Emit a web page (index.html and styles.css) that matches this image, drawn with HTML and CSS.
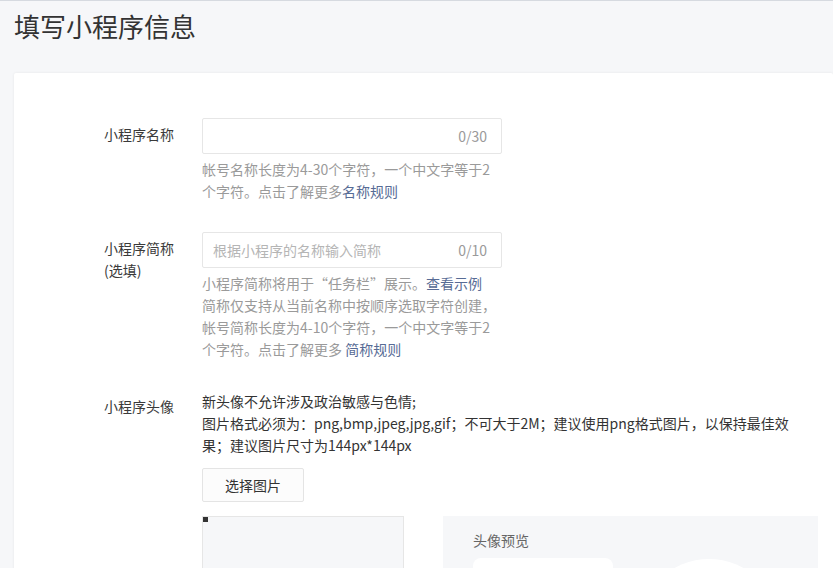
FILE: index.html
```html
<!DOCTYPE html>
<html lang="zh-CN">
<head>
    <meta charset="UTF-8">
    <meta name="viewport" content="width=device-width, initial-scale=1.0">
    <title>填写小程序信息</title>
    <link rel="stylesheet" href="styles.css">
</head>
<body>
    <div class="page">
        <h1 class="page-title">填写小程序信息</h1>
        <div class="card">
            <div class="form-row">
                <label class="form-label">小程序名称</label>
                <div class="form-field">
                    <div class="input-box">
                        <input type="text" class="text-input">
                        <span class="counter">0/30</span>
                    </div>
                    <p class="hint">帐号名称长度为4-30个字符，一个中文字等于2个字符。点击了解更多<a href="#" class="link">名称规则</a></p>
                </div>
            </div>

            <div class="form-row">
                <label class="form-label">小程序简称<br>(选填)</label>
                <div class="form-field">
                    <div class="input-box">
                        <input type="text" class="text-input" placeholder="根据小程序的名称输入简称">
                        <span class="counter">0/10</span>
                    </div>
                    <p class="hint">小程序简称将用于“任务栏”展示。<a href="#" class="link">查看示例</a><br>简称仅支持从当前名称中按顺序选取字符创建，<br>帐号简称长度为4-10个字符，一个中文字等于2个字符。点击了解更多 <a href="#" class="link">简称规则</a></p>
                </div>
            </div>

            <div class="form-row">
                <label class="form-label">小程序头像</label>
                <div class="form-field">
                    <p class="desc">新头像不允许涉及政治敏感与色情;<br>图片格式必须为：png,bmp,jpeg,jpg,gif；不可大于2M；建议使用png格式图片，以保持最佳效果；建议图片尺寸为144px*144px</p>
                    <button type="button" class="btn">选择图片</button>
                    <div class="avatar-area">
                        <div class="crop-box">
                            <span class="crop-handle"></span>
                        </div>
                        <div class="preview">
                            <div class="preview-title">头像预览</div>
                            <div class="preview-list">
                                <div class="preview-square"></div>
                                <div class="preview-circle"></div>
                            </div>
                        </div>
                    </div>
                </div>
            </div>
        </div>
    </div>
</body>
</html>
```

FILE: styles.css
```css
html, body {
    margin: 0;
    padding: 0;
}
body {
    font-family: "Noto Sans CJK SC", "Microsoft YaHei", sans-serif;
    font-size: 14px;
    color: #333;
    background-color: #f6f7f9;
    border-top: 1px solid #d6dae0;
    overflow: hidden;
}
.page {
    padding-left: 14px;
}
.page-title {
    margin: 0;
    padding-top: 8px;
    font-size: 26px;
    font-weight: normal;
    line-height: 34px;
    color: #333;
}
.card {
    margin-top: 30px;
    padding: 45px 0 40px 90px;
    background-color: #fff;
    border-radius: 2px;
    box-shadow: 0 0 3px rgba(0,0,0,0.07);
    min-height: 500px;
}
.form-row {
    display: flex;
    margin-bottom: 30px;
}
.form-label {
    width: 98px;
    flex-shrink: 0;
    padding-top: 5px;
    line-height: 22px;
    color: #3a3a3a;
}
.form-field {
    flex: 1;
}
.input-box {
    display: flex;
    align-items: center;
    width: 298px;
    height: 34px;
    border: 1px solid #e6e6e6;
    border-radius: 2px;
    background: #fff;
}
.text-input {
    flex: 1;
    min-width: 0;
    height: 100%;
    padding: 0 10px;
    border: none;
    outline: none;
    background: transparent;
    font-family: inherit;
    font-size: 14px;
    color: #333;
}
.text-input::placeholder {
    color: #b5b5b5;
}
.counter {
    padding-right: 14px;
    color: #9a9a9a;
    font-size: 14px;
}
.hint {
    width: 300px;
    margin: 4px 0 0;
    line-height: 22px;
    color: #9a9a9a;
}
.link {
    color: #576b95;
    text-decoration: none;
}
.desc {
    max-width: 590px;
    margin: 0;
    line-height: 22px;
    color: #333;
}
.btn {
    display: block;
    margin-top: 12px;
    width: 102px;
    height: 34px;
    border: 1px solid #e4e4e4;
    border-radius: 2px;
    background: #fcfcfc;
    font-family: inherit;
    font-size: 14px;
    color: #333;
    cursor: pointer;
}
.avatar-area {
    display: flex;
    margin-top: 14px;
    gap: 39px;
}
.crop-box {
    position: relative;
    width: 200px;
    height: 200px;
    border: 1px solid #e6e6e6;
    background-color: #f6f7f9;
}
.crop-handle {
    position: absolute;
    top: 0;
    left: 0;
    width: 5px;
    height: 5px;
    background-color: #333;
}
.preview {
    width: 315px;
    padding: 13px 30px;
    background-color: #f6f7f9;
}
.preview-title {
    line-height: 22px;
    color: #666;
}
.preview-list {
    display: flex;
    gap: 26px;
    margin-top: 7px;
}
.preview-square {
    width: 140px;
    height: 140px;
    border-radius: 8px;
    background-color: #fff;
}
.preview-circle {
    width: 140px;
    height: 140px;
    margin-top: 1px;
    border-radius: 50%;
    background-color: #fff;
}
```
